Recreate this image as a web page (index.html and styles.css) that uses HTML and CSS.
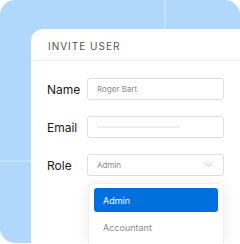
FILE: index.html
```html
<!DOCTYPE html>
<html lang="en">
<head>
    <meta charset="UTF-8">
    <meta name="viewport" content="width=device-width, initial-scale=1.0">
    <title>Invite User</title>
    <link rel="stylesheet" href="styles.css">
</head>
<body>
    <div class="panel">
        <div class="card">
            <div class="card-header">INVITE USER</div>

            <!-- Invite form -->
            <div class="form">
                <div class="row">
                    <span class="label">Name</span>
                    <div class="field"><span class="placeholder">Roger Bart</span></div>
                </div>
                <div class="row">
                    <span class="label">Email</span>
                    <div class="field"><span class="skeleton"></span></div>
                </div>
                <div class="row">
                    <span class="label">Role</span>
                    <div class="field select">
                        <span class="placeholder">Admin</span>
                        <svg class="chevron" width="7" height="4" viewBox="0 0 7 4">
                            <path d="M0.5 0.5 L3.5 3.3 L6.5 0.5" fill="none" stroke="#b5b5b5" stroke-width="0.9"/>
                        </svg>
                    </div>
                </div>

                <div class="menu">
                    <div class="option active">Admin</div>
                    <div class="option">Accountant</div>
                </div>
            </div>
        </div>
    </div>
</body>
</html>
```

FILE: styles.css
```css
body {
    margin: 0;
    width: 240px;
    height: 244px;
    overflow: hidden;
    background-color: #fff;
    font-family: Inter, "Liberation Sans", sans-serif;
}

.panel {
    width: 240px;
    height: 243px;
    box-sizing: border-box;
    padding: 29px 0 0 31px;
    border-radius: 15px;
    background-color: #b1d7fa;
    /* faint grid lines behind the card */
    background-image:
        linear-gradient(to right, transparent 164px, #c4e1fb 164px, #c4e1fb 166px, transparent 166px),
        linear-gradient(to bottom, transparent 160px, #c4e1fb 160px, #c4e1fb 162px, transparent 162px);
}

.card {
    width: 209px;
    height: 214px;
    overflow: hidden;
    background-color: #fff;
    border-radius: 12px 0 0 0;
}

.card-header {
    height: 32px;
    box-sizing: border-box;
    padding: 11px 0 0 17px;
    font-size: 10px;
    letter-spacing: 1px;
    color: #555;
    border-bottom: 1px solid #f0f0f0;
}

.form {
    padding: 17px 16px 0 16px;
    display: flex;
    flex-direction: column;
    gap: 16px;
}

.row {
    display: flex;
    align-items: center;
}

.label {
    width: 40px;
    font-size: 12px;
    color: #1a1a1a;
}

.field {
    width: 137px;
    height: 22px;
    box-sizing: border-box;
    border: 1px solid #dedede;
    border-radius: 3px;
    display: flex;
    align-items: center;
    padding-left: 9px;
}

.placeholder {
    font-size: 8px;
    color: #8a8a8a;
}

.skeleton {
    width: 83px;
    height: 2px;
    background-color: #efefef;
}

.select {
    justify-content: space-between;
    padding-right: 11px;
}

.menu {
    margin: -9px 0 0 41px;
    width: 136px;
    height: 62px;
    box-sizing: border-box;
    padding: 4px 5px;
    border: 1px solid #f0f0f0;
    border-bottom: none;
    border-radius: 6px 6px 0 0;
    background-color: #fff;
    box-shadow: 0 2px 14px rgba(0, 0, 0, 0.08);
}

.option {
    height: 24px;
    display: flex;
    align-items: center;
    padding-left: 9px;
    font-size: 9px;
    color: #8a8a8a;
    border-radius: 3px;
}

.option.active {
    background-color: #0070dd;
    color: #fff;
    margin-bottom: 3px;
}
```
